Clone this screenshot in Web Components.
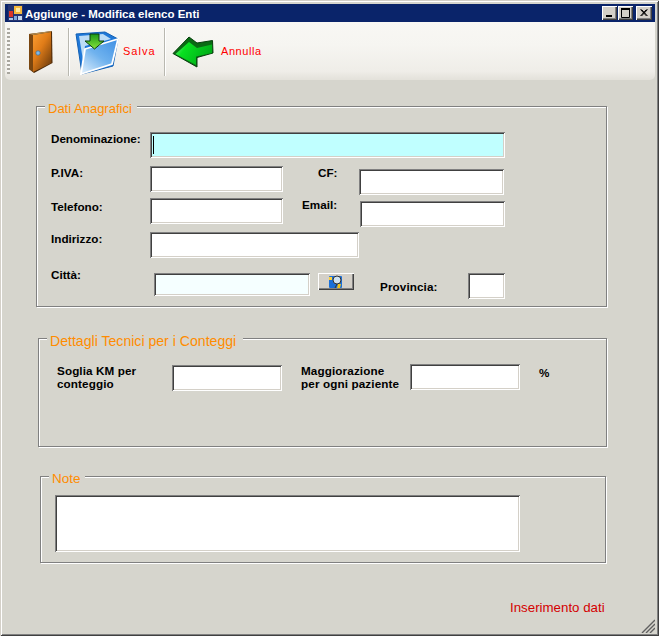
<!DOCTYPE html>
<html lang="it"><head><meta charset="utf-8"><title>Aggiunge - Modifica elenco Enti</title>
<style>
html,body{margin:0;padding:0;background:#d6d5cd;overflow:hidden}
</style></head><body>
<win-window>
  <win-title>Aggiunge - Modifica elenco Enti</win-title>
  <win-toolbar></win-toolbar>
  <win-group title-text="Dati Anagrafici" style="margin:26px 0 0 31px;width:571px;height:201px;padding:25px 0 0 14px;--tx:8px;--tw:92px;--fs:13px">
    <win-row>
      <win-label style="width:99px;letter-spacing:-.05px">Denominazione:</win-label>
      <win-field style="width:355px;height:26px;background:#c0ffff" caret></win-field>
    </win-row>
    <win-row style="margin-top:8px;height:29px">
      <win-label style="width:99px">P.IVA:</win-label>
      <win-field style="width:133px;height:26px"></win-field>
      <win-label style="margin-left:35px;width:41px">CF:</win-label>
      <win-field style="width:145px;height:26px;margin-top:3px"></win-field>
    </win-row>
    <win-row style="margin-top:3px;height:29px">
      <win-label style="width:99px;margin-top:2px">Telefono:</win-label>
      <win-field style="width:133px;height:26px"></win-field>
      <win-label style="margin-left:19px;width:58px">Email:</win-label>
      <win-field style="width:145px;height:26px;margin-top:3px"></win-field>
    </win-row>
    <win-row style="margin-top:5px">
      <win-label style="width:99px">Indirizzo:</win-label>
      <win-field style="width:209px;height:26px"></win-field>
    </win-row>
    <win-row style="margin-top:15px">
      <win-label style="width:103px;margin-top:-5px">Città:</win-label>
      <win-field style="width:156px;height:23px;background:#f5ffff"></win-field>
      <win-lookup style="margin-left:8px"></win-lookup>
      <win-label style="margin-left:26px;width:88px;margin-top:7px;letter-spacing:.1px">Provincia:</win-label>
      <win-field style="width:37px;height:26px"></win-field>
    </win-row>
  </win-group>
  <win-group title-text="Dettagli Tecnici per i Conteggi" style="margin:31px 0 0 33px;width:569px;height:109px;padding:25px 0 0 18px;--tx:8px;--tw:196px;--fs:14.100px">
    <win-row>
      <win-label style="width:115px;letter-spacing:.1px">Soglia KM per<br>conteggio</win-label>
      <win-field style="width:110px;height:26px;margin-top:1px"></win-field>
      <win-label style="margin-left:19px;width:109px;letter-spacing:.12px">Maggiorazione<br>per ogni paziente</win-label>
      <win-field style="width:110px;height:26px"></win-field>
      <win-label style="margin-left:19px;margin-top:2px">%</win-label>
    </win-row>
  </win-group>
  <win-group title-text="Note" style="margin:29px 0 0 35px;width:566px;height:87px;padding:18px 0 0 14px;--tx:8px;--tw:36px;--fs:13.500px">
    <win-field style="width:465px;height:57px"></win-field>
  </win-group>
  <win-status style="margin:37px 0 0 505px">Inserimento dati</win-status>
  <win-grip></win-grip>
</win-window>
<script>
function def(name, css, html, extra){
  customElements.define(name, class extends HTMLElement{
    constructor(){super();const s=this.attachShadow({mode:'open'});s.innerHTML='<style>'+css+'</style>'+html;}
    connectedCallback(){ if(extra) extra(this); }
  });
}
def('win-window',
 `:host{display:block;position:relative;box-sizing:border-box;width:659px;height:636px;padding:4px 4px 2px 5px;background:#d6d5cd;
  box-shadow:inset 1px 1px 0 #d4d0c8,inset -1px -1px 0 #404040,inset 2px 2px 0 #fff,inset -2px -2px 0 #808080;overflow:hidden}`,
 `<slot></slot>`);
def('win-title',
 `:host{display:flex;align-items:center;height:18px;background:#0a246a;color:#fff;font:bold 11.500px/18px "Liberation Sans",sans-serif;letter-spacing:0}
  svg{margin:0 2px 0 3px;flex:none}
  .t{flex:1;white-space:nowrap;padding-top:1px}
  .b{flex:none;box-sizing:border-box;width:15px;height:14px;background:#d4d0c8;box-shadow:inset 1px 1px 0 #fff,inset -1px -1px 0 #404040,inset -2px -2px 0 #808080;display:flex;align-items:center;justify-content:center}
  .b+.b{margin-left:1px}
  .b+.b.c{margin:0 3px 0 3px;width:16px}`,
 `<svg width="15" height="16" viewBox="0 0 15 16"><rect x="0" y="0" width="15" height="16" fill="#26346f"/><rect x="1" y="6" width="4" height="6" fill="#d8352a"/><rect x="1" y="13" width="4" height="2" fill="#a9c6e8"/><rect x="6" y="1" width="8" height="8" fill="#f5b93c"/><rect x="8" y="3" width="4" height="4" fill="#ffe9a0"/><rect x="6" y="11" width="3" height="4" fill="#7ea9dd"/><rect x="10" y="11" width="4" height="4" fill="#c7d9ef"/></svg>
  <span class="t"><slot></slot></span>
  <span class="b"><svg style="margin:0" width="15" height="14"><rect x="4" y="9" width="6" height="2" fill="#000"/></svg></span>
  <span class="b"><svg style="margin:0" width="15" height="14"><path d="M3.500 2.500h8v9h-8z" fill="none" stroke="#000"/><rect x="3" y="2" width="9" height="2"/></svg></span>
  <span class="b c"><svg style="margin:0" width="16" height="14"><path d="M4.500 3.500l6 6.500M5.500 3.500l6 6.500M10.500 3.500l-6 6.500M11.500 3.500l-6 6.500" stroke="#000"/></svg></span>`);
def('win-toolbar',
 `:host{display:flex;align-items:flex-start;height:58px;border-radius:0 0 5px 5px;background:linear-gradient(#f8f7f4 0,#f6f5f1 40%,#efede8 85%,#e3e1da 100%);font:11px/14px "Liberation Sans",sans-serif;color:#f00;letter-spacing:1px}
  .grip{flex:none;width:3px;height:46px;margin:6px 0 0 2px;background:repeating-linear-gradient(#a9a79f 0 2px,#f8f7f4 2px 4px)}
  .sep{flex:none;width:1px;height:48px;margin-top:6px;background:#b9b8b0;box-shadow:1px 0 0 #fff}
  svg{flex:none;display:block}
  span{flex:none;margin-top:22px}`,
 `<div class="grip"></div>
 <svg style="margin:8px 0 0 16px" width="30" height="46" viewBox="0 0 30 46">
  <defs><linearGradient id="d" x1="0" y1="0" x2=".8" y2="1"><stop offset="0" stop-color="#fb9e33"/><stop offset=".45" stop-color="#e07c18"/><stop offset="1" stop-color="#6e3c0c"/></linearGradient></defs>
  <path d="M3 4 L26 1 L26.500 33 L8 43 L3 39Z" fill="#4a2706"/>
  <path d="M7 5 L25 2 L25.500 33 L7 42Z" fill="url(#d)"/>
  <path d="M3 4 L7 5 L7 42 L3 39Z" fill="#7a4610"/>
  <path d="M3 4 L26 1 L25 2 L7 5Z" fill="#b88c4c"/>
  <circle cx="12" cy="23" r="2.200" fill="#7db8e8" stroke="#44688a" stroke-width=".7"/>
 </svg>
 <div class="sep" style="margin-left:12px"></div>
 <svg style="margin:8px 0 0 6px" width="46" height="46" viewBox="0 0 46 46">
  <defs><linearGradient id="f" x1="1" y1="0" x2=".2" y2="1"><stop offset="0" stop-color="#3d8fe4"/><stop offset=".55" stop-color="#6fb2ee"/><stop offset="1" stop-color="#cfe6fa"/></linearGradient>
  <linearGradient id="g" x1="0" y1="0" x2="0" y2="1"><stop offset="0" stop-color="#1c9a16"/><stop offset="1" stop-color="#86e23c"/></linearGradient></defs>
  <path d="M1 4 L30 2 L43 9 L38 36 L7 44Z" fill="#1f78d8" stroke="#1260b4"/>
  <path d="M4 6 L28 4 L36 9 L10 16 L8 30Z" fill="#bcdcf6"/>
  <path d="M10 19 L43 9 L37 34 L6 44Z" fill="url(#f)" stroke="#fff" stroke-width="1.800"/>
  <path d="M15 4 H24 V11 H29 L19.500 19 L10 11 H15Z" fill="url(#g)" stroke="#0d3f10" stroke-width="1"/>
 </svg>
 <span style="margin-left:2px;width:41px">Salva</span>
 <div class="sep"></div>
 <svg style="margin:13px 0 0 5px" width="46" height="36" viewBox="0 0 46 36">
  <defs><linearGradient id="a" x1="0" y1=".2" x2="1" y2=".6"><stop offset="0" stop-color="#60f070"/><stop offset=".25" stop-color="#08e020"/><stop offset="1" stop-color="#00a818"/></linearGradient></defs>
  <path d="M3 18.500 L19 2 L27 8 L42.500 5.500 L43 18 L27 22.500 L27 32Z" fill="#0a6a14" stroke="#06400c"/>
  <path d="M5.500 19 L19 7 L27 13 L42 9.500 L42 18 L26 21.500 L26 30Z" fill="url(#a)"/>
 </svg>
 <span style="margin-left:5px;letter-spacing:.55px">Annulla</span>`);
def('win-group',
 `:host{display:block;position:relative;box-sizing:border-box;border:1px solid #808080;box-shadow:1px 1px 0 #fff,inset 1px 1px 0 #fff}
  .lg{position:absolute;left:var(--tx);top:-6px;width:var(--tw);box-sizing:border-box;padding-left:3px;height:17px;background:#d6d5cd;color:#ff8c00;font:var(--fs)/16px "Liberation Sans",sans-serif;white-space:nowrap}`,
 `<div class="lg"></div><slot></slot>`,
 el=>{el.shadowRoot.querySelector('.lg').textContent=el.getAttribute('title-text');});
def('win-row',`:host{display:flex;align-items:flex-start}`,`<slot></slot>`);
def('win-label',
 `:host{display:block;flex:none;box-sizing:border-box;color:#000;font:bold 11.700px/13px "Liberation Sans",sans-serif;white-space:nowrap}`,
 `<slot></slot>`);
def('win-field',
 `:host{display:block;flex:none;position:relative;box-sizing:border-box;background:#fff;
   box-shadow:inset 1px 1px 0 #808080,inset -1px -1px 0 #fff,inset 2px 2px 0 #404040,inset -2px -2px 0 #d4d0c8}
  i{position:absolute;left:3px;top:4px;bottom:4px;width:1px;background:#000}`,
 ``,
 el=>{ if(el.hasAttribute('caret')) el.shadowRoot.appendChild(document.createElement('i')); });
def('win-lookup',
 `:host{display:flex;flex:none;align-items:center;justify-content:center;box-sizing:border-box;width:36px;height:17px;background:#d4d0c8;box-shadow:inset 1px 1px 0 #fff,inset -1px -1px 0 #404040,inset -2px -2px 0 #808080}`,
 `<svg width="16" height="14" viewBox="0 0 16 14"><rect x="1" y="1" width="13" height="12" rx="1" fill="#1a6fd8"/><path d="M9 13 h3 l1-4 h-3z" fill="#f5c518"/><path d="M9 9 L7 13" stroke="#333"/><circle cx="9" cy="5" r="4" fill="#cfe3f2" stroke="#333"/><rect x="1" y="2" width="3" height="3" fill="#ffd23a"/></svg>`);
def('win-status',
 `:host{display:block;color:#d40000;font:13.300px/16px "Liberation Sans",sans-serif;white-space:nowrap}`,
 `<slot></slot>`);
def('win-grip',
 `:host{position:absolute;right:4px;bottom:3px;width:14px;height:14px;display:block}`,
 `<svg width="14" height="14" viewBox="0 0 14 14"><path d="M14 1 L1 14 M14 5 L5 14 M14 9 L9 14" stroke="#606060" stroke-width="1.400"/></svg>`);
</script>
</body></html>
